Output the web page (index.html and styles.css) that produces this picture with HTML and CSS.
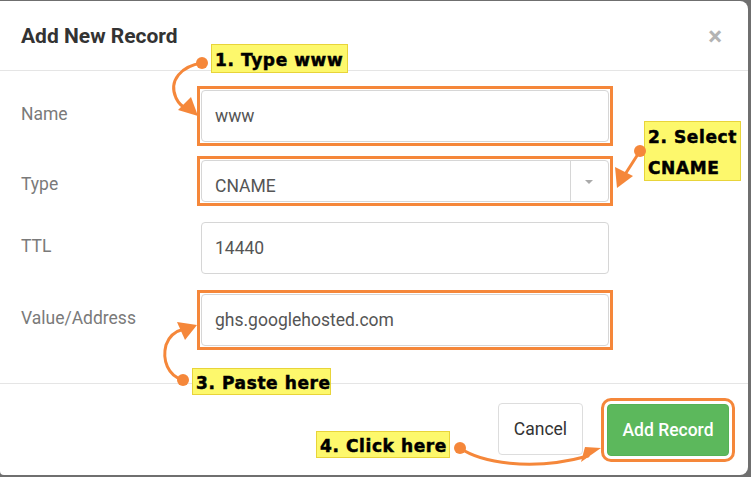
FILE: index.html
```html
<!DOCTYPE html>
<html lang="en">
<head>
<meta charset="utf-8">
<title>Add New Record</title>
<link rel="stylesheet" href="styles.css">
</head>
<body>
<div class="dialog">
  <div class="header">
    <h4 class="title">Add New Record</h4>
    <span class="close">×</span>
  </div>
  <div class="body">
    <div class="row">
      <div class="label">Name</div>
      <div class="hl"><div class="input">www</div></div>
    </div>
    <div class="row">
      <div class="label">Type</div>
      <div class="hl">
        <div class="select">
          <span class="select-value">CNAME</span>
          <span class="select-caret"></span>
        </div>
      </div>
    </div>
    <div class="row">
      <div class="label">TTL</div>
      <div class="input">14440</div>
    </div>
    <div class="row">
      <div class="label">Value/Address</div>
      <div class="hl"><div class="input">ghs.googlehosted.com</div></div>
    </div>
  </div>
  <div class="footer">
    <button class="btn btn-cancel">Cancel</button>
    <button class="btn btn-primary hl-btn">Add Record</button>
  </div>
</div>

<div class="note note-1">1. Type www</div>
<div class="note note-2">2. Select<br>CNAME</div>
<div class="note note-3">3. Paste here</div>
<div class="note note-4">4. Click here</div>

<svg class="arrows" width="751" height="477" viewBox="0 0 751 477">
  <g fill="none" stroke="#f5873a" stroke-width="3" stroke-linecap="round">
    <path d="M202 63 C182 66 168 80 176 98 C179 104 183 107 186 108"/>
    <path d="M640 151 L624 176"/>
    <path d="M183 380 C168 376 162 360 166 345 C169 336 176 331 184 329"/>
    <path d="M460 448 C480 462 530 472 588 456"/>
  </g>
  <g fill="#f5873a">
    <circle cx="202" cy="63" r="6"/>
    <polygon points="198,116 178,110 191,97"/>
    <circle cx="640" cy="151" r="6"/>
    <polygon points="617,188 615,167 633,176"/>
    <circle cx="183" cy="380" r="6"/>
    <polygon points="197,325 185,340 177,322"/>
    <circle cx="460" cy="448" r="6"/>
    <polygon points="601,448 581,462 585,447"/>
  </g>
</svg>
</body>
</html>
```

FILE: styles.css
```css
html, body {
  margin: 0;
  padding: 0;
}

body {
  position: relative;
  width: 751px;
  height: 477px;
  background: #6f6f6f;
  font-family: Roboto, "Liberation Sans", Arial, sans-serif;
  overflow: hidden;
}

.dialog {
  margin: 1px 3px 0 0;
  height: 474px;
  background: #fff;
  border-radius: 0 8px 8px 4px;
  display: flex;
  flex-direction: column;
}

.header {
  height: 69px;
  border-bottom: 1px solid #e5e5e5;
  padding: 0 26px 0 21px;
  display: flex;
  align-items: center;
  justify-content: space-between;
}

.title {
  margin: 0;
  font-size: 21px;
  font-weight: 700;
  color: #333;
}

.close {
  font-size: 26px;
  font-weight: 700;
  color: #b3b3b3;
  line-height: 1;
}

.body {
  padding: 19px 0 37px 21px;
  border-bottom: 1px solid #e5e5e5;
}

.row {
  display: flex;
  margin-bottom: 20px;
}

.row:first-child {
  margin-bottom: 18px;
}

.row:last-child {
  margin-bottom: 0;
}

.label {
  width: 180px;
  padding-top: 14px;
  font-size: 17.5px;
  line-height: 20px;
  color: #7a7a7a;
}

.input {
  box-sizing: border-box;
  width: 408px;
  height: 52px;
  border: 1px solid #d6d6d6;
  border-radius: 4px;
  padding: 0 13px;
  display: flex;
  align-items: center;
  font-size: 17.5px;
  color: #555;
}

.select {
  box-sizing: border-box;
  width: 408px;
  height: 42px;
  border: 1px solid #d6d6d6;
  border-radius: 4px;
  display: flex;
  align-items: stretch;
  font-size: 17.5px;
  color: #555;
}

.select-value {
  flex: 1;
  padding: 9px 13px 0;
  display: flex;
  align-items: center;
}

.select-caret {
  width: 37px;
  border-left: 1px solid #d6d6d6;
  position: relative;
}

.select-caret::after {
  content: "";
  position: absolute;
  left: 14px;
  top: 19px;
  border-left: 4px solid transparent;
  border-right: 4px solid transparent;
  border-top: 4px solid #aaa;
}

.hl {
  outline: 3px solid #f5873a;
  outline-offset: 1px;
}

.footer {
  flex: 1;
  display: flex;
  justify-content: flex-end;
  align-items: flex-start;
  gap: 24px;
  padding: 20px 19px 0 0;
}

.btn {
  height: 52px;
  border-radius: 4px;
  font-family: Roboto, "Liberation Sans", Arial, sans-serif;
  font-size: 17.5px;
  padding: 0 10px;
  cursor: pointer;
}

.btn-cancel {
  width: 85px;
  background: #fff;
  border: 1px solid #ddd;
  color: #333;
  margin-top: -1px;
}

.btn-primary {
  width: 122px;
  background: #5cb85c;
  border: 1px solid #55b255;
  color: #fff;
  font-weight: 500;
}

.hl-btn {
  outline: 3px solid #f5873a;
  outline-offset: 3px;
}

.note {
  position: absolute;
  box-sizing: border-box;
  background: #fdf86c;
  border: 1px solid #e8d43a;
  font-family: "DejaVu Sans", sans-serif;
  font-weight: 700;
  font-size: 17px;
  color: #000;
  -webkit-text-stroke: 0.5px #000;
  white-space: nowrap;
  padding: 0 3px;
  letter-spacing: 0.6px;
}

.note-1 {
  left: 211px;
  top: 44px;
  width: 137px;
  height: 29px;
  line-height: 31px;
}

.note-2 {
  left: 644px;
  top: 121px;
  width: 97px;
  height: 60px;
  line-height: 31px;
}

.note-3 {
  left: 192px;
  top: 368px;
  width: 139px;
  height: 27px;
  line-height: 29px;
}

.note-4 {
  left: 316px;
  top: 431px;
  width: 134px;
  height: 27px;
  line-height: 29px;
}

.arrows {
  position: absolute;
  left: 0;
  top: 0;
  pointer-events: none;
}
```
